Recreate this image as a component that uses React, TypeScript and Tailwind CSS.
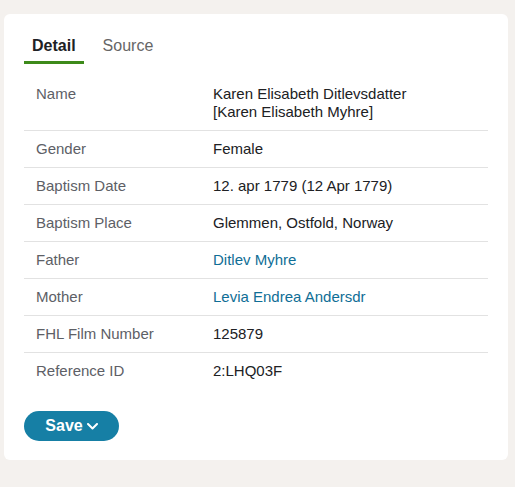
const rows: { label: string; value: string[]; link?: boolean }[] = [
  { label: "Name", value: ["Karen Elisabeth Ditlevsdatter", "[Karen Elisabeth Myhre]"] },
  { label: "Gender", value: ["Female"] },
  { label: "Baptism Date", value: ["12. apr 1779 (12 Apr 1779)"] },
  { label: "Baptism Place", value: ["Glemmen, Ostfold, Norway"] },
  { label: "Father", value: ["Ditlev Myhre"], link: true },
  { label: "Mother", value: ["Levia Endrea Andersdr"], link: true },
  { label: "FHL Film Number", value: ["125879"] },
  { label: "Reference ID", value: ["2:LHQ03F"] },
];

export default function App() {
  return (
    <div className="min-h-[487px] bg-[#f4f1ee] pt-[14px] pl-[4px] pr-[7px] font-['Liberation_Sans',Arial,sans-serif]">
      <div className="bg-white rounded-[6px] px-[20px] pt-[22px] pb-[19px]">
        {/* tabs */}
        <div className="flex items-end text-[16px] leading-[20px]">
          <div className="px-[8px] pb-[5px] border-b-[3px] border-[#3d8a1a] font-bold text-[#202124]">
            Detail
          </div>
          <div className="ml-[11px] px-[8px] pb-[5px] border-b-[3px] border-transparent text-[#666]">
            Source
          </div>
        </div>

        <div className="mt-[12px] w-[464px] text-[15px] leading-[18px]">
          {rows.map((r, i) => (
            <div
              key={r.label}
              className={`flex py-[9px] ${i < rows.length - 1 ? "border-b border-[#e2e2e2]" : ""}`}
            >
              <div className="w-[189px] pl-[12px] text-[#5d6066]">{r.label}</div>
              <div className={r.link ? "text-[#0f6e96]" : "text-[#202124]"}>
                {r.value.map((v) => (
                  <div key={v}>{v}</div>
                ))}
              </div>
            </div>
          ))}
        </div>

        <button className="mt-[22px] h-[30px] w-[95px] rounded-full bg-[#167fa5] text-white font-bold text-[16px] leading-[20px] flex items-center justify-center gap-[4px]">
          Save
          <svg width="11" height="7" viewBox="0 0 11 7" fill="none" className="mt-[1px]">
            <polyline points="1,1 5.5,5.5 10,1" stroke="white" strokeWidth="2" strokeLinecap="round" strokeLinejoin="round" />
          </svg>
        </button>
      </div>
    </div>
  );
}
